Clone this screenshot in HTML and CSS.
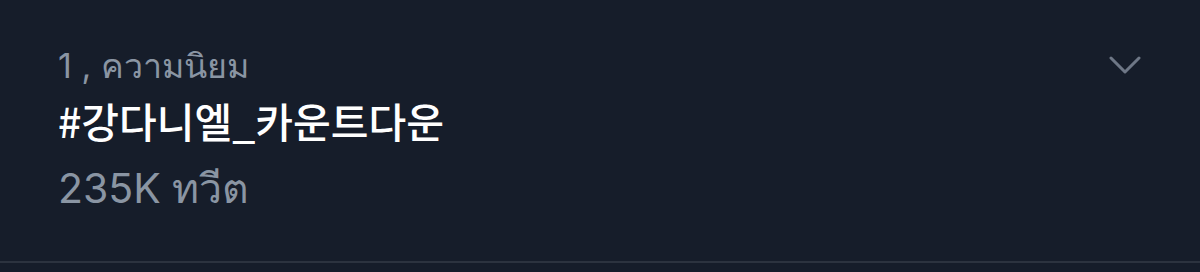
FILE: index.html
```html
<!DOCTYPE html>
<html lang="th">
<head>
    <meta charset="UTF-8">
    <title>Trend</title>
    <link rel="stylesheet" href="styles.css">
</head>
<body>
    <div class="trend">
        <div class="trend-body">
            <div class="trend-meta">1 , ความนิยม</div>
            <div class="trend-name">#강다니엘_카운트다운</div>
            <div class="trend-count">235K ทวีต</div>
        </div>
        <div class="trend-more">
            <svg width="32" height="20" viewBox="0 0 32 20">
                <path d="M2 3 L16 17 L30 3" fill="none" stroke="#6e7786" stroke-width="3" stroke-linecap="round" stroke-linejoin="round"/>
            </svg>
        </div>
    </div>
</body>
</html>
```

FILE: styles.css
```css
body {
    margin: 0;
    background-color: #161d2a;
    font-family: Inter, "Noto Sans", "Noto Sans CJK KR", sans-serif;
    height: 272px;
}

.trend {
    display: flex;
    justify-content: space-between;
    padding: 34px 59px 0 58px;
    height: 227px;
    border-bottom: 2px solid #2c333f;
}

.trend-meta {
    font-size: 34px;
    line-height: 63px;
    color: #8a95a3;
}

.trend-name {
    margin-top: -6px;
    font-family: "Noto Sans CJK KR", sans-serif;
    font-size: 41px;
    font-weight: 500;
    line-height: 59px;
    color: #ffffff;
}

.trend-count {
    margin-top: 5px;
    font-size: 41px;
    line-height: 67px;
    color: #8a95a3;
}

.trend-more {
    padding-top: 21px;
}
```
